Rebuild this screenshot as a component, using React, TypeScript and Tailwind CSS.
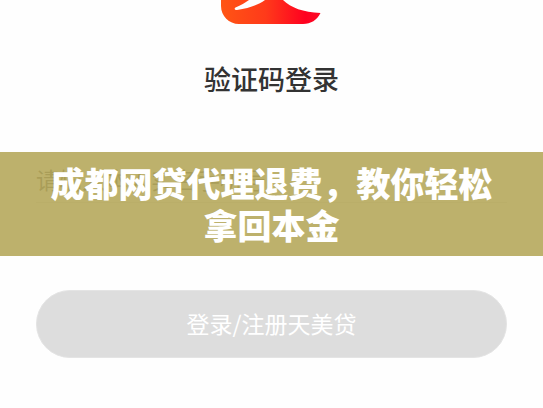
import React, { useState } from 'react';

const Logo: React.FC = () => (
  <svg className="mx-auto block" width="101" height="24" viewBox="0 0 101 24" aria-hidden="true">
    <defs>
      <linearGradient id="logo-fill" x1="0" y1="0" x2="1" y2="0">
        <stop offset="0" stopColor="#ff5514" />
        <stop offset="0.45" stopColor="#ff3a1a" />
        <stop offset="0.85" stopColor="#ff0020" />
        <stop offset="1" stopColor="#fb0a25" />
      </linearGradient>
    </defs>
    <path
      fill="url(#logo-fill)"
      d="M0 0H28C24 3 20 5 14.500 7.500C13 8.500 13.500 10 16 10C28 8 37 5 44 0H62C70 8 82 12 99.500 13C96 20 90 24 82 24H18C8 24 0 16 0 6Z"
    />
  </svg>
);

// see-through strip, the phone field stays faintly visible below it
const Banner: React.FC<{ text: string }> = ({ text }) => (
  <div className="pointer-events-none absolute inset-x-0 top-0 z-10 bg-[#b6a85c]/90 px-12 py-[10px]">
    <h1 className="text-center text-[34px] leading-[42px] font-black text-white">{text}</h1>
  </div>
);

export default function App() {
  const [phone, setPhone] = useState('');

  return (
    <main className="min-h-screen bg-[#fefefe] font-['Noto_Sans_CJK_SC',sans-serif]">
      <Logo />
      <h2 className="mt-[35px] text-center text-[27px] leading-10 font-medium text-[#333333]">验证码登录</h2>

      <form onSubmit={(e) => e.preventDefault()}>
        <div className="relative mt-[53px] h-[104px] px-9">
          <Banner text="成都网贷代理退费，教你轻松拿回本金" />
          <input
            type="tel"
            aria-label="手机号"
            placeholder="请输入本人实名手机号"
            value={phone}
            onChange={(e) => setPhone(e.target.value)}
            className="h-[51px] w-full border-b border-[#dddddd] pt-1 text-[23px] outline-none placeholder:text-[#333333]"
          />
        </div>
        <div className="px-9 pt-[34px]">
          <button
            type="submit"
            className="h-[68px] w-full rounded-full border border-[#e4e4e4] bg-[#dddddd] pb-[2px] text-[23px] text-white"
          >
            登录/注册天美贷
          </button>
        </div>
      </form>
    </main>
  );
}
